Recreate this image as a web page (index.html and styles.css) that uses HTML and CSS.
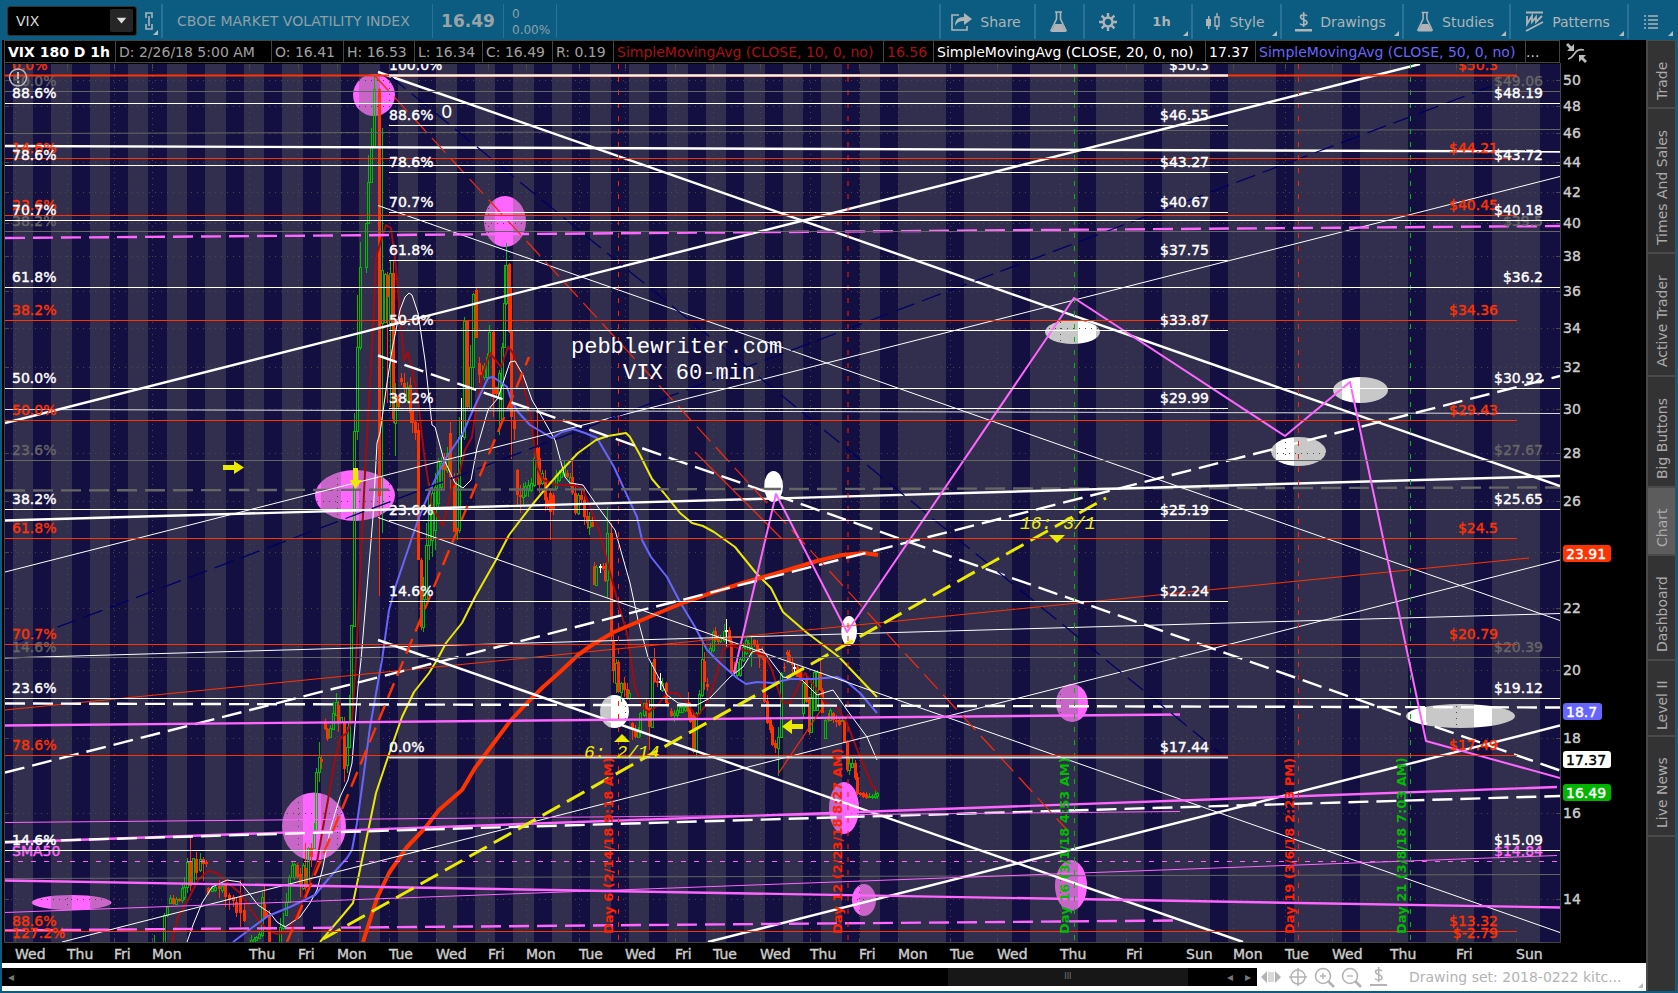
FILE: index.html
```html
<!DOCTYPE html>
<html lang="en">
<head>
<meta charset="utf-8">
<title>VIX chart</title>
<link rel="stylesheet" href="styles.css">
</head>
<body>
<header class="toolbar">
  <div class="symbol-box">
    <select class="symbol" aria-label="Symbol"><option>VIX</option></select>
    <svg class="symbol-arrow" viewBox="0 0 24 24" aria-hidden="true"><path d="M7 9h10l-5 6z"/></svg>
  </div>
  <button class="link-btn corner" aria-label="Link symbol">
    <svg width="10" height="18" viewBox="0 0 10 18"><path d="M2 6V1h6v5M2 12v5h6v-5M5 4v10" fill="none" stroke="currentColor" stroke-width="1.6"/></svg>
  </button>
  <h1 class="name">CBOE MARKET VOLATILITY INDEX</h1>
  <div class="last">16.49</div>
  <div class="change"><span>0</span><span>0.00%</span></div>
  <nav class="tools">
    <button class="tool t-share">
      <svg width="21" height="18" viewBox="0 0 21 18"><path d="M8 2H1v15h15v-4" fill="none" stroke="currentColor" stroke-width="1.6"/><path d="M4 13c0-6 3-9 9-9V0l8 6-8 6V8c-4 0-7 1-9 5z" fill="currentColor"/></svg>Share
    </button>
    <button class="tool t-flask" aria-label="Studies lab">
      <svg width="19" height="22" viewBox="0 0 19 22"><path d="M6 1h7M7.500 1v7L2 19.500h15L11.500 8V1" fill="none" stroke="currentColor" stroke-width="1.600"/><path d="M6 13h7l4 8H2z" fill="currentColor"/></svg>
    </button>
    <button class="tool t-gear" aria-label="Settings">
      <svg width="18" height="18" viewBox="-9 -9 18 18"><circle r="4.500" fill="none" stroke="currentColor" stroke-width="2.400"/><path d="M0-9v4M0 5v4M-9 0h4M5 0h4M-6.400-6.400l3 3M3.400 3.400l3 3M-6.400 6.400l3-3M3.400-3.400l3-3" stroke="currentColor" stroke-width="2.400"/></svg>
    </button>
    <button class="tool t-time corner">1h</button>
    <button class="tool t-style corner">
      <svg width="16" height="18" viewBox="0 0 16 18"><path d="M1 6h5v7H1zM3 3h1.500v13H3z" fill="currentColor"/><path d="M10 4h4v9h-4zM12 0v4M12 13v4" fill="none" stroke="currentColor" stroke-width="1.400"/></svg>Style
    </button>
    <button class="tool t-draw corner">
      <svg width="17" height="20" viewBox="0 0 17 20"><path d="M12 4C11 2.500 5.500 2 5.500 5S12 7.500 12 10.500 6 13.500 5 11.500M8.700 0v15" fill="none" stroke="currentColor" stroke-width="1.600"/><path d="M0 17h17v2.500H0z" fill="currentColor"/></svg>Drawings
    </button>
    <button class="tool t-studies corner">
      <svg width="18" height="22" viewBox="0 0 19 22"><path d="M6 1h7M7.500 1v7L2 19.500h15L11.500 8V1" fill="none" stroke="currentColor" stroke-width="1.600"/><path d="M6 13h7l4 8H2z" fill="currentColor"/></svg>Studies
    </button>
    <button class="tool t-patterns corner">
      <svg width="19" height="21" viewBox="0 0 19 21"><path d="M1 1.500h17" stroke="currentColor" stroke-width="2"/><path d="M2 5v8l5-8v6l4-5v5l6-6M1 20L18 11" fill="none" stroke="currentColor" stroke-width="1.800"/></svg>Patterns
    </button>
    <button class="tool t-list corner" aria-label="List">
      <svg width="14" height="14" viewBox="0 0 14 14"><path d="M0 1h2M4 1h10M0 5h2M4 5h10M0 9h2M4 9h10M0 13h2M4 13h10" stroke="currentColor" stroke-width="1.400"/></svg>
    </button>
  </nav>
</header>

<div class="workspace">
  <main class="main">
    <div class="info">
      <div class="cells">
        <b>VIX 180 D 1h</b><span>D: 2/26/18 5:00 AM</span><span>O: 16.41</span><span>H: 16.53</span><span>L: 16.34</span><span>C: 16.49</span><span>R: 0.19</span>
        <span class="sma10">SimpleMovingAvg (CLOSE, 10, 0, no)</span><span class="sma10">16.56</span>
        <span class="sma20">SimpleMovingAvg (CLOSE, 20, 0, no)</span><span class="sma20">17.37</span>
        <span class="sma50">SimpleMovingAvg (CLOSE, 50, 0, no)</span><span class="dots">...</span>
      </div>
      <button class="scale-btn" aria-label="Scale mode">
        <svg width="22" height="20" viewBox="0 0 22 20"><path d="M2 16c4-1 5-3 7-6s5-4 9-3" fill="none" stroke="currentColor" stroke-width="1.600"/><path d="M8 1v7H1l2.500-2.500L0 2l2-2 3.500 3.500zM13 12h7l-2.500 2.500L21 18l-2 2-3.500-3.500L13 19z" fill="currentColor"/></svg>
      </button>
    </div>
    <svg class="chart" id="chart" viewBox="2 63 1644 900" role="img" aria-label="VIX hourly price chart"></svg>
    <footer class="bottom">
      <div class="scroller">
        <button class="arrow" aria-label="Scroll to start">◂</button>
        <div class="track"><div class="thumb">III</div></div>
        <button class="arrow" aria-label="Scroll left">◂</button>
        <button class="arrow" aria-label="Scroll right">▸</button>
      </div>
      <div class="zoombar">
        <button aria-label="Fit"><svg width="20" height="14" viewBox="0 0 20 14"><path d="M0 7l6-6v12zM20 7l-6-6v12z" fill="currentColor"/><path d="M8 2v10M10 2v10M12 2v10" stroke="currentColor"/></svg></button>
        <button aria-label="Crosshair"><svg width="18" height="18" viewBox="0 0 18 18"><circle cx="9" cy="9" r="7" fill="none" stroke="currentColor" stroke-width="1.500"/><path d="M9 0v18M0 9h18" stroke="currentColor" stroke-width="1.500"/></svg></button>
        <button aria-label="Zoom in"><svg width="21" height="21" viewBox="0 0 21 21"><circle cx="9" cy="9" r="7.500" fill="none" stroke="currentColor" stroke-width="1.600"/><path d="M14 14l6 6" stroke="currentColor" stroke-width="2.600"/><path d="M6 9h6M9 6v6" stroke="currentColor" stroke-width="1.400"/></svg></button>
        <button aria-label="Zoom out"><svg width="21" height="21" viewBox="0 0 21 21"><circle cx="9" cy="9" r="7.500" fill="none" stroke="currentColor" stroke-width="1.600"/><path d="M14 14l6 6" stroke="currentColor" stroke-width="2.600"/><path d="M6 9h6" stroke="currentColor" stroke-width="1.400"/></svg></button>
        <button aria-label="Price tool"><svg width="17" height="20" viewBox="0 0 17 20"><path d="M12 4C11 2.500 5.500 2 5.500 5S12 7.500 12 10.500 6 13.500 5 11.500M8.700 0v15" fill="none" stroke="currentColor" stroke-width="1.500"/><path d="M0 17h17v2H0z" fill="currentColor"/></svg></button>
        <button class="set corner">Drawing set: 2018-0222 kitc...</button>
      </div>
    </footer>
  </main>
  <aside class="side">
    <button class="tab s1">Trade</button>
    <button class="tab s2">Times And Sales</button>
    <button class="tab s3">Active Trader</button>
    <button class="tab s4">Big Buttons</button>
    <button class="tab s5 active">Chart</button>
    <button class="tab s6">Dashboard</button>
    <button class="tab s7">Level II</button>
    <button class="tab s8">Live News</button>
  </aside>
</div>
<script src="chart.js"></script>
</body>
</html>
```
FILE: styles.css
```css
* { box-sizing: border-box; }
body {
  margin: 0;
  height: 100vh;
  display: flex;
  flex-direction: column;
  background: #0b5c80;
  font-family: "DejaVu Sans", Verdana, sans-serif;
  font-size: 14px;
  overflow: hidden;
}
button { font: inherit; color: inherit; background: none; border: 0; padding: 0; margin: 0; }

.toolbar { height: 40px; flex: none; display: flex; padding: 4px 2px 2px 7px; color: #a9b4ba; }
.symbol-box { position: relative; width: 130px; height: 30px; margin-top: 2px; }
.symbol {
  appearance: none; width: 100%; height: 100%; background: #000; color: #d8d8d8;
  border: 1px solid #333; border-radius: 3px; padding: 0 8px; font: 14px "DejaVu Sans", sans-serif;
}
.symbol-arrow { position: absolute; right: 4px; top: 3px; width: 23px; height: 23px; background: #262626; border-radius: 2px; fill: #ddd; pointer-events: none; }
.link-btn { width: 24px; display: flex; justify-content: center; padding-top: 8px; }
.corner { position: relative; }
.corner::after {
  content: ""; position: absolute; right: 3px; bottom: 3px;
  border-left: 5px solid transparent; border-bottom: 5px solid #b4bcc0;
}
.name { margin: 0; border-left: 2px solid #2a7396; width: 271px; padding-left: 14px; font-size: 14px; font-weight: 400; line-height: 35px; white-space: nowrap; color: #8fa0a8; }
.last { border-left: 1px solid #2a7396; width: 71px; text-align: center; font-size: 17px; line-height: 35px; font-weight: 700; color: #9aa4a8; }
.change { border-left: 1px solid #2a7396; border-right: 1px solid #2a7396; width: 54px; padding-left: 8px; display: flex; flex-direction: column; font-size: 12px; line-height: 16px; color: #8fa0a8; padding-top: 2px; }
.tools { margin-left: auto; display: flex; color: #b0b4b6; }
.tool { border-left: 2px solid #2a7396; display: flex; align-items: center; justify-content: center; gap: 8px; height: 35px; padding-right: 3px; }
.t-share { width: 95px; }
.t-flask { width: 49px; }
.t-gear { width: 50px; }
.t-time { width: 58px; font-weight: 700; font-size: 13px; }
.t-style { width: 89px; }
.t-draw { width: 122px; }
.t-studies { width: 107px; }
.t-patterns { width: 118px; }
.t-list { width: 49px; }

.workspace { flex: 1; min-height: 0; display: flex; padding: 0 2px 2px 2px; }
.main { flex: 1; min-width: 0; display: flex; flex-direction: column; background: #000; }
.info { height: 23px; flex: none; display: flex; padding-left: 2px; }
.cells {
  flex: 1; display: grid;
  grid-template-columns: 111px 156px 72px 71px 68px 70px 61px 270px 50px 272px 50px 270px 1fr;
  border: 1px solid #444; line-height: 22px; color: #a0a0a0; white-space: nowrap; overflow: hidden;
}
.cells > * { padding-left: 3px; border-right: 1px solid #444; overflow: hidden; }
.cells > :last-child { border-right: 0; padding-left: 0; }
.cells b { color: #fff; }
.cells .sma10 { color: #a81014; }
.cells .sma20 { color: #fff; }
.cells .sma50 { color: #6666ff; }
.cells .dots { color: #ccc; }
.scale-btn { width: 86px; flex: none; padding: 3px 0 0 6px; text-align: left; color: #bbb; }

.chart { flex: 1; min-height: 0; width: 100%; display: block; background: #000; }
.chart text { font-family: "DejaVu Sans", sans-serif; font-size: 14px; }
.chart .axis { fill: #ccc; stroke: #ccc; stroke-width: 0.4; }
.chart .day { font-size: 13px; font-weight: 700; }
.chart .title { font-family: "Liberation Mono", monospace; font-size: 22px; fill: #fff; }
.chart .note { font-family: "Liberation Mono", monospace; font-size: 18px; font-style: italic; fill: #eaea00; }
.chart .zero { font-size: 18px; fill: #fff; }

.bottom { height: 28px; flex: none; background: #fff; display: flex; align-items: center; }
.scroller { flex: 1; height: 18px; background: #000; display: flex; color: #777; font-size: 12px; line-height: 18px; }
.scroller .arrow { width: 18px; }
.track { flex: 1; display: flex; justify-content: flex-end; }
.thumb { width: 20%; background: #171717; margin-right: 33px; text-align: center; font-size: 8px; color: #777; }
.zoombar { width: 389px; display: flex; align-items: center; color: #b3b3b3; }
.zoombar button { width: 27px; height: 28px; display: flex; align-items: center; justify-content: center; flex: none; }
.zoombar .set { flex: 1; color: #b3b3b3; justify-content: flex-start; padding-left: 17px; white-space: nowrap; }

.side { width: 30px; flex: none; background: #4a4a4a; display: flex; flex-direction: column; gap: 2px; padding: 1px 1px 0 2px; }
.side::after { content: ""; flex: 1; background: #333; }
.tab { writing-mode: vertical-rl; transform: rotate(180deg); background: #333; color: #aaa; font-size: 14px; line-height: 26px; text-align: center; flex: none; width: 27px; padding-bottom: 14px; }
.tab.active { background: #5c5c5c; }
.s1 { height: 66px; }
.s2 { height: 143px; }
.s3 { height: 121px; }
.s4 { height: 109px; }
.s5 { height: 66px; }
.s6 { height: 103px; }
.s7 { height: 74px; }
.s8 { height: 98px; }
```
FILE: chart.js
```js
const NS = 'http://www.w3.org/2000/svg';
const root = document.getElementById('chart');
const PLOT = { left: 5, top: 64, right: 1560, bottom: 942 };

function add(parent, tag, attrs, text) {
  const el = document.createElementNS(NS, tag);
  for (const k in attrs) el.setAttribute(k, attrs[k]);
  if (text !== undefined) el.textContent = text;
  parent.appendChild(el);
  return el;
}
const rect = (p, x, y, w, h, fill, extra) => add(p, 'rect', { x, y, width: w, height: h, fill, ...extra });
const line = (p, x1, y1, x2, y2, stroke, width = 1, dash) =>
  add(p, 'line', { x1, y1, x2, y2, stroke, 'stroke-width': width, ...(dash ? { 'stroke-dasharray': dash } : {}) });
const label = (p, x, y, text, fill, anchor = 'start') =>
  add(p, 'text', { x, y, fill, stroke: fill, 'stroke-width': 0.4, 'text-anchor': anchor }, text);

const defs = add(root, 'defs', {});
const clip = add(defs, 'clipPath', { id: 'plotClip' });
rect(clip, PLOT.left, PLOT.top, PLOT.right - PLOT.left, PLOT.bottom - PLOT.top, '#000');
const plot = add(root, 'g', { 'clip-path': 'url(#plotClip)' });

const WHITE = '#fff', RED = '#ff3300', GRAY = '#666', PINK = '#ff66ff', YELLOW = '#eaea00', NAVY = '#000066', GREEN = '#00bb00';

rect(plot, 5, 63, 1555, 880, '#130f40');

// Highlighted zones: cx, cy, rx, ry
[[374, 95, 21, 21], [505, 221.5, 21, 25.5], [355, 495.5, 40, 25.5], [314, 826.5, 32, 34], [71.5, 902.5, 40, 7.5],
 [844, 808, 15, 26], [864, 900, 12, 16], [1072, 703, 16, 19], [1071, 885.5, 16, 25.5]]
  .forEach(([cx, cy, rx, ry]) => add(plot, 'ellipse', { cx, cy, rx, ry, fill: PINK }));
[[614.5, 711.5, 14.5, 16.5], [773.5, 486.5, 9.5, 15.5], [849, 631, 8, 15], [1072.5, 332, 27.5, 12],
 [1360.5, 390, 27.5, 13], [1298.5, 451.5, 27.5, 14.5], [1460.5, 716, 54.5, 12]]
  .forEach(([cx, cy, rx, ry]) => add(plot, 'ellipse', { cx, cy, rx, ry, fill: WHITE }));

// Trading sessions are shaded; the gaps between them stay dark
const gaps = [[5, 13], [33, 51], [72, 90], [110, 128], [148, 167], [187, 205], [226, 244], [264, 282], [303, 321], [341, 359],
  [380, 398], [418, 436], [457, 475], [495, 513], [534, 552], [572, 590], [611, 629], [649, 667], [688, 706], [726, 744],
  [765, 783], [803, 821], [842, 860], [880, 898], [946, 964], [1012, 1030], [1078, 1096], [1144, 1162], [1210, 1228],
  [1276, 1294], [1342, 1360], [1408, 1426], [1474, 1492], [1540, 1560]];
for (let i = 0; i < gaps.length - 1; i++)
  rect(plot, gaps[i][1], 63, gaps[i + 1][0] - gaps[i][1], 880, '#666', { 'fill-opacity': 0.36 });

// Grid and axes
const priceY = p => 79.7 + 643.9 * Math.log(50 / p);
const prices = [50, 48, 46, 44, 42, 40, 38, 36, 34, 32, 30, 28, 26, 22, 20, 18, 16, 14];
[...prices, 24].forEach(p => {
  const y = Math.round(priceY(p)) + 0.5;
  line(plot, 5, y, 1560, y, '#4a4a40', 1, '1 5');
  line(plot, 5, y, 9, y, '#4a4a40');
  line(plot, 1556, y, 1560, y, '#4a4a40');
});
prices.forEach(p => add(root, 'text', { x: 1563, y: Math.round(priceY(p)) + 5, class: 'axis' }, p));
const days = [['Wed', 15], ['Thu', 67], ['Fri', 114], ['Mon', 152], ['Thu', 249], ['Fri', 298], ['Mon', 337], ['Tue', 389], ['Wed', 436],
  ['Fri', 488], ['Mon', 526], ['Tue', 579], ['Wed', 625], ['Fri', 675], ['Tue', 713], ['Wed', 760], ['Thu', 810], ['Fri', 859],
  ['Mon', 898], ['Tue', 950], ['Wed', 997], ['Thu', 1060], ['Fri', 1126], ['Sun', 1186], ['Mon', 1233], ['Tue', 1285],
  ['Wed', 1332], ['Thu', 1390], ['Fri', 1456], ['Sun', 1516]];
days.forEach(([d, x]) => {
  line(plot, x + 0.5, 64, x + 0.5, 942, '#4a4a40', 1, '1 5');
  line(plot, x + 0.5, 64, x + 0.5, 69, '#4a4a40');
  line(plot, x + 0.5, 938, x + 0.5, 942, '#4a4a40');
  add(root, 'text', { x, y: 959, class: 'axis' }, d);
});

// Candles: x, high, body top, body bottom, low, kind; coordinates are thirds of a pixel from the block's origin
const blocks = [
  { x: 140, y: 680, bars: `41 765 786 800 800 g;73 700 705 800 800 g;82 680 682 705 710 g;91 645 653 668 672 g;99 645 655 672 675 r;108 652 658 672 674 g;116 655 658 664 665 r;125 610 625 660 668 g;133 590 620 652 660 g;142 535 547 622 640 g;149 472 547 618 632 r;158 533 535 610 615 g;169 515 537 578 600 r;181 520 537 570 575 g;190 530 537 552 602 r;199 540 547 552 560 r;205 622 625 638 645 r;216 618 625 632 635 g;225 615 622 630 636 g;236 600 618 628 655 r;247 605 618 630 640 g;256 608 612 650 682 r;267 640 645 660 690 r;278 645 652 662 680 r;289 650 665 700 710 r;301 600 650 700 740 r;313 670 690 722 725 r;332 765 780 800 800 g;341 770 776 785 786 g;349 768 772 780 782 g;356 755 762 775 778 g;365 635 650 765 770 g;371 618 672 712 715 r;379 695 700 712 714 r;388 690 705 800 800 r;421 715 740 800 800 g;430 700 735 745 750 g;438 640 665 705 706 g;447 585 590 665 667 g;456 545 555 590 592 g;463 548 553 590 600 g;470 550 556 590 598 r;479 565 583 615 650 r;488 550 555 625 630 g;495 490 565 625 655 r;504 500 505 625 630 g;512 490 505 530 560 r;521 430 450 505 508 g;529 265 275 450 452 g;536 185 230 275 305 g;544 228 237 247 268 r;554 118 124 148 150 r;562 145 148 178 182 r;570 135 145 172 175 g;579 65 100 148 150 g;587 38 65 105 106 g;595 62 75 125 155 r;603 110 112 125 126 g;611 112 130 267 305 r;620 140 200 255 280 g;628 45 125 200 205 g;634 -166 -166 120 125 g` },
  { x: 340, y: 240, bars: `43 520 573 1158 1162 g;52 165 322 573 600 g;61 5 82 322 330 g;78 -51 -51 82 98 g;85 -255 -174 -51 -48 g;93 -336 -279 -174 -170 g;102 -492 -453 -279 -275 g;118 -455 -453 767 1068 r;127 -336 90 250 880 g;134 100 103 245 250 g;142 97 105 172 490 r;151 60 98 250 500 g;160 60 98 537 550 r;166 430 468 550 648 g;175 465 468 500 510 r;184 400 415 425 435 r;193 398 430 448 470 r;201 425 440 480 490 g;209 410 435 520 550 r;217 510 512 550 580 r;225 540 545 580 600 r;233 550 570 960 960 r;242 955 960 1160 1170 r;250 1010 1077 1160 1175 g;259 850 915 1077 1080 g;268 730 765 915 960 g;277 735 760 900 950 g;285 700 740 870 930 g;293 655 660 790 800 g;302 650 670 740 750 g;311 640 650 690 750 r;320 620 640 690 700 g;329 545 580 710 760 r;341 700 730 875 875 r;350 700 710 870 900 g;358 530 590 870 880 g;364 475 585 588 650 w;373 230 243 590 600 g;382 240 242 500 505 r;391 315 380 505 510 g;398 160 163 380 450 g;407 142 150 293 295 r;416 350 370 405 430 r;425 375 395 410 415 r;432 370 378 410 420 g;440 340 350 410 415 g;448 255 275 345 350 g;458 270 277 463 530 r;467 440 440 462 475 r;476 390 400 475 585 g;485 310 320 540 550 g;491 75 188 322 325 g;497 10 75 190 195 g;506 70 72 275 280 r;514 140 272 530 657 r;523 510 540 567 600 r;530 688 690 765 800 r;539 735 765 770 820 r;548 730 745 770 795 g;556 725 738 765 770 g;565 720 735 750 770 g;573 715 730 750 755 g;581 620 655 735 740 g;590 520 625 655 735 r;598 620 655 735 760 r;606 690 700 730 735 g;614 690 715 780 812 r;622 770 780 800 810 r;630 745 760 815 900 r;639 760 765 810 825 r;648 690 705 745 750 g;656 690 700 720 725 g;664 685 695 710 715 g;672 660 680 705 710 g;681 690 700 712 715 r;689 700 710 730 740 g;696 650 710 760 765 r;705 730 760 820 825 r;713 760 765 820 825 g;722 740 765 780 790 r;731 750 780 830 855 r;740 810 828 850 868 r;748 815 840 860 885 g;755 830 845 860 862 r` },
  { x: 570, y: 530, bars: `71 95 107 164 165 r;79 105 110 164 165 g;89 103 108 110 130 w;98 100 108 118 120 r;104 100 120 152 155 r;112 -70 10 150 205 g;122 -20 10 318 335 r;130 315 333 422 460 r;137 388 398 460 490 g;145 390 397 487 490 r;154 455 460 485 515 g;163 440 460 480 500 r;170 460 478 505 510 r;178 480 490 505 510 g;187 575 580 600 630 r;196 585 600 622 625 r;204 590 600 622 625 g;211 545 550 600 620 g;221 518 520 555 560 g;228 505 520 540 570 r;236 510 535 590 660 r;245 395 398 592 595 g;253 355 388 455 460 r;262 440 452 460 470 r;269 430 452 455 480 w;277 445 458 480 485 g;287 455 458 520 522 r;295 515 518 522 525 r;302 535 543 557 560 r;311 540 548 556 575 g;320 530 540 555 570 g;329 525 530 545 550 g;337 525 532 545 550 g;345 520 532 540 545 g;353 485 515 545 565 r;361 520 545 575 580 r;369 550 555 665 668 r;377 545 548 660 680 g;386 480 492 550 552 g;395 325 388 495 500 g;402 365 392 455 480 r;410 445 462 470 482 r;419 340 355 365 368 g;428 300 305 360 365 g;434 290 303 330 335 r;443 315 322 335 345 r;451 315 320 332 340 g;461 283 303 330 335 g;467 266 300 303 355 w;476 290 300 335 340 r;484 320 332 425 428 r;493 395 420 430 440 r;502 385 395 435 440 g;510 380 388 435 440 g;519 340 350 390 395 g;527 325 330 370 375 g;535 330 340 360 365 g;543 320 350 370 410 g;552 328 330 345 350 r;560 330 345 370 375 r;567 355 365 385 415 r;576 350 370 385 390 r;583 375 378 515 518 r;592 495 513 580 582 r;600 560 570 600 610 r;607 585 590 645 648 r;616 630 640 655 668 r;625 590 622 655 738 g;633 425 430 620 622 g;641 400 410 415 425 r;650 360 365 375 400 r;657 360 375 395 398 r;665 385 395 405 430 r;673 400 410 413 430 w;682 405 412 440 442 r;690 420 425 445 448 r;699 455 460 550 560 g;707 430 450 515 518 r;716 500 500 605 615 r;724 450 500 605 608 g;733 420 425 540 542 g;741 420 425 540 542 g;749 390 425 480 482 r;757 475 480 548 550 r;765 560 570 625 628 g;773 550 560 570 575 r;781 535 540 570 572 g;790 545 550 570 580 r;798 555 570 575 590 r;806 560 570 585 587 r;815 560 570 573 575 g;822 560 572 635 637 r;830 630 635 720 725 r;838 680 700 720 735 g;847 685 700 712 715 g;855 690 700 745 750 r;862 730 740 793 796 r;871 785 790 794 797 r;880 785 790 802 805 r;888 785 792 803 808 r;897 790 797 801 803 g;905 792 797 800 808 g;914 780 793 800 808 g;922 785 790 797 808 g` }
];
blocks.forEach(b => b.bars.split(';').forEach(s => {
  const v = s.split(' ');
  const [x, hi, top, bot, lo] = v.slice(0, 5).map(Number);
  const cx = Math.round(b.x + x / 3) + 0.5;
  const Y = n => Math.round(b.y + n / 3);
  const h = Math.max(Y(bot) - Y(top), 1);
  if (v[5] === 'r') {
    line(plot, cx, Y(hi), cx, Y(lo), RED);
    rect(plot, cx - 1.5, Y(top), 3, h, RED);
  } else {
    const c = v[5] === 'g' ? GREEN : WHITE;
    line(plot, cx, Y(hi), cx, Y(top), c);
    line(plot, cx, Y(bot), cx, Y(lo), c);
    rect(plot, cx - 1, Y(top) + 0.5, 2, h, 'none', { stroke: c });
  }
}));

// Moving averages
const curve = (pts, stroke, width) => add(plot, 'polyline', { points: pts, fill: 'none', stroke, 'stroke-width': width, 'stroke-linejoin': 'round' });
curve('172,942 178,917 188,900 198,880 208,871 217,873 228,883 240,893 248,905 258,920 268,930 277,934 287,932 295,918 303,900 310,883 317,862 322,833 328,800 335,760 340,738 347,733 352,720 356,660 365,473 373,330 376,257 386,225 391,228 396,267 404,361 408,352 417,392 424,453 432,507 443,526 452,487 459,475 465,450 472,437 477,403 483,373 490,353 497,362 501,367 508,347 513,353 522,380 530,413 537,467 543,480 557,485 573,485 582,488 590,507 599,530 618,603 627,633 635,687 643,708 649,712 657,706 667,693 677,693 687,703 697,717 707,703 715,680 723,650 730,645 743,650 765,655 772,670 782,702 790,703 798,687 805,673 815,687 825,703 837,707 847,723 860,757 872,785 877,791', '#a00c10', 2);
curve('187,942 193,925 202,903 212,887 227,880 240,882 248,892 258,905 270,913 277,922 285,927 300,917 310,903 317,890 323,867 330,830 340,797 348,780 352,763 358,687 361,660 373,517 377,443 380,433 387,383 392,350 400,310 405,297 409,293 412,295 418,313 425,360 432,425 435,427 443,457 455,483 463,488 471,480 477,448 488,410 498,398 510,362 515,361 523,375 532,400 542,417 555,440 565,477 570,483 583,485 598,507 615,530 630,583 638,620 648,657 660,680 667,695 678,703 697,705 710,698 730,677 743,667 752,652 762,649 768,657 783,677 802,680 817,695 833,690 847,710 867,737 877,760', WHITE, 1);
curve('233,942 253,927 268,916 290,907 315,895 330,877 347,858 352,850 357,823 363,780 370,727 382,660 389,610 397,582 418,520 432,486 446,458 463,433 473,410 488,378 493,377 502,383 507,387 512,402 518,412 530,425 552,438 562,432 573,429 585,433 597,438 614,467 637,517 642,540 651,557 667,577 680,602 695,627 707,650 720,663 737,678 746,684 757,682 773,683 790,679 813,679 837,677 847,682 860,693 877,713', '#6666ff', 2);
curve('320,942 343,915 353,903 362,860 376,793 388,757 402,717 414,692 429,673 437,660 446,643 462,623 475,597 496,560 509,535 532,505 546,488 560,472 578,453 596,440 608,436 626,433 630,437 640,455 652,479 664,493 680,513 692,523 703,526 714,532 735,547 756,573 771,588 783,612 806,632 839,657 877,697', YELLOW, 2);
curve('363,942 377,898 389,873 407,847 425,828 439,810 462,790 475,768 496,740 511,720 527,703 543,687 560,672 578,655 592,645 614,632 649,617 685,602 714,592 746,582 781,572 817,561 842,555 864,553 878,555', RED, 4);

// Trend lines
[
  [5, 133.5, 1560, 129.5, GRAY, 1], [5, 878.5, 1560, 874.5, GRAY, 1], [5, 490.5, 1560, 487.5, GRAY, 2, '20 8'],
  [5, 146, 1560, 151.5, WHITE, 2], [5, 409.5, 1560, 413.5, '#ddd', 1], [5, 520.5, 1560, 476, WHITE, 2],
  [5, 658, 1560, 613.5, WHITE, 1], [5, 710, 1529, 558, RED, 1],
  [5, 423, 1420, 64, WHITE, 2], [378, 72, 1560, 486, WHITE, 2], [378, 205.5, 1560, 620.5, WHITE, 1],
  [5, 572, 1560, 176.5, WHITE, 1], [62, 942, 1560, 560, WHITE, 1], [378, 517.5, 1560, 932.5, WHITE, 1],
  [378, 640, 1243, 942, WHITE, 2], [708, 942, 1560, 725.5, WHITE, 2],
  [378, 355.5, 1560, 770.5, WHITE, 2, '20 8'], [5, 772.5, 1560, 376, WHITE, 2, '20 8'], [5, 703.5, 1560, 707.5, WHITE, 2, '20 8'],
  [5, 842.5, 1557, 787, PINK, 2], [5, 842, 1560, 796, WHITE, 2, '20 8'],
  [5, 238, 1560, 226, PINK, 2, '20 8'], [5, 725.5, 1180, 714.5, PINK, 2], [5, 822.5, 1180, 811.5, PINK, 1],
  [5, 861.5, 1560, 861.5, PINK, 1, '5 8'], [5, 880.5, 1560, 907.5, PINK, 2], [5, 912.5, 1557, 855.5, PINK, 1], [5, 930.5, 1175, 920.5, PINK, 2, '20 8'],
  [5, 647, 1497, 84, NAVY, 1.3, '20 8'], [390, 76, 1225, 757, NAVY, 1.3, '20 8'],
  [375, 76, 1069, 832, '#ee2a10', 1.3, '20 8'], [695, 452, 782, 539, '#ee2a10', 1.3], [778, 774, 821, 710, '#ee2a10', 1.3],
  [287, 942, 529, 357, RED, 2, '16 8'], [323, 939, 1106, 498, YELLOW, 3, '20 8'],
  [618.5, 64, 618.5, 942, '#ff2200', 1, '5 8'], [848, 64, 848, 942, '#ff2200', 1, '5 8'], [1298.5, 64, 1298.5, 942, '#ff2200', 1, '5 8'],
  [1074.5, 64, 1074.5, 942, '#00bb00', 1, '5 8'], [1410.5, 64, 1410.5, 942, '#00bb00', 1, '5 8']
].forEach(([x1, y1, x2, y2, color, w, dash]) => line(plot, x1, y1, x2, y2, color, w === 2 ? 2.4 : w, dash));

// Projected path
curve('734,673 776,494 847,632 1074,298 1285,436 1350,382 1426,741 1560,778', PINK, 2);

// Retracement levels
const levels = (rows, x1, x2, color, xl, xr) => rows.forEach(([pct, price, y]) => {
  line(plot, x1, y, x2, y, color);
  label(plot, xl, y - 6, pct, color);
  label(plot, xr, y - 6, price, color, 'end');
});
levels([['50.0%', '$49.06', 91.5], ['38.2%', '$39.5', 231.5], ['23.6%', '$27.67', 460.5], ['14.6%', '$20.39', 657.5]], 5, 1560, GRAY, 12, 1543);
levels([['0.0%', '$50.3', 75.5], ['14.6%', '$44.21', 158.5], ['23.6%', '$40.45', 215.5], ['38.2%', '$34.36', 320.5], ['50.0%', '$29.43', 420.5],
  ['61.8%', '$24.5', 538.5], ['70.7%', '$20.79', 644.5], ['78.6%', '$17.49', 755.5], ['88.6%', '$13.32', 931.5]], 5, 1517, RED, 12, 1498);
label(plot, 12, 938, '127.2%', RED);
label(plot, 1498, 938, '$-2.79', RED, 'end');
line(plot, 5, 75.5, 1517, 75.5, RED, 2);
label(plot, 12, 856, 'SMA50', PINK);
label(plot, 1543, 856, '$14.84', PINK, 'end');
levels([['88.6%', '$48.19', 103.5], ['78.6%', '$43.72', 165.5], ['70.7%', '$40.18', 220.5], ['61.8%', '$36.2', 287.5], ['50.0%', '$30.92', 388.5],
  ['38.2%', '$25.65', 509.5], ['23.6%', '$19.12', 698.5], ['14.6%', '$15.09', 850.5]], 5, 1560, WHITE, 12, 1543);
levels([['100.0%', '$50.3', 75.5], ['88.6%', '$46.55', 125.5], ['78.6%', '$43.27', 172.5], ['70.7%', '$40.67', 212.5], ['61.8%', '$37.75', 260.5],
  ['50.0%', '$33.87', 330.5], ['38.2%', '$29.99', 408.5], ['23.6%', '$25.19', 520.5], ['14.6%', '$22.24', 601.5], ['0.0%', '$17.44', 757.5]], 389, 1228, WHITE, 389, 1209);
line(plot, 389, 75.5, 1228, 75.5, '#ffb09a', 3);
line(plot, 389, 75.5, 1228, 75.5, WHITE, 1);
line(plot, 389, 757.5, 1228, 757.5, '#ddd', 2);

// Cycle dates, drawn bottom to top beside their vertical lines
[[613, 'Day 6 (2/14/18 9:18 AM)', '#ff2200'], [842, 'Day 12 (2/23/18 8:27 AM)', '#ff2200'], [1069, 'Day 16 (3/1/18 4:53 AM)', '#00bb00'],
 [1294, 'Day 19 (3/6/18 2:23 PM)', '#ff2200'], [1406, 'Day 21 (3/8/18 7:03 AM)', '#00bb00']]
  .forEach(([x, t, fill]) => add(plot, 'text', { transform: `translate(${x} 934) rotate(-90)`, fill, class: 'day' }, t));

// Arrows and notes
['M223 465h11v-4l10 6.500-10 6.500v-4h-11z', 'M353 468h5v12h4l-6.500 9-6-9h3.500z', 'M803 724h-11v-5l-10 7.500 10 7.500v-5h11z',
 'M614 742h16l-8-8z', 'M1049 535h16l-8 8z'].forEach(d => add(plot, 'path', { d, fill: YELLOW }));
add(plot, 'text', { x: 571, y: 353, class: 'title' }, 'pebblewriter.com');
add(plot, 'text', { x: 623, y: 379, class: 'title' }, 'VIX 60-min');
add(plot, 'text', { x: 584, y: 758, class: 'note' }, '6: 2/14');
add(plot, 'text', { x: 1020, y: 529, class: 'note' }, '16: 3/1');
add(plot, 'text', { x: 441, y: 118, class: 'zero' }, '0');
add(plot, 'circle', { cx: 18, cy: 77.5, r: 8.5, fill: 'none', stroke: '#bbb', 'stroke-width': 1.5 });
line(plot, 18, 72, 18, 79, '#bbb', 2);
line(plot, 18, 81, 18, 83, '#bbb', 2);

// Frame and last-value bubbles
add(root, 'path', { d: 'M4.500 63v879.500H1560.500V63', fill: 'none', stroke: '#444' });
[['23.91', 545, 48, RED, WHITE], ['18.7', 703, 39, '#6666ff', WHITE], ['17.37', 751, 48, WHITE, '#000'], ['16.49', 784, 48, '#00b400', WHITE]]
  .forEach(([t, y, w, bg, fg]) => {
    rect(root, 1563, y, w, 17, bg, { rx: 3 });
    label(root, 1566, y + 14, t, fg);
  });
```
